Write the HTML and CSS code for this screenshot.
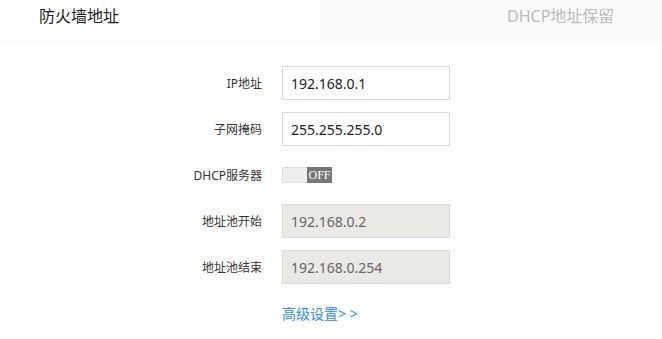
FILE: index.html
```html
<!DOCTYPE html>
<html lang="zh-CN">
<head>
    <meta charset="UTF-8">
    <meta name="viewport" content="width=device-width, initial-scale=1.0">
    <title>防火墙地址</title>
    <link rel="stylesheet" href="styles.css">
</head>
<body>
    <!-- Tabs -->
    <div class="tabs">
        <div class="tab active">防火墙地址</div>
        <div class="tab">DHCP地址保留</div>
    </div>

    <div class="form">
        <label class="form-label">IP地址</label>
        <input class="form-input" type="text" value="192.168.0.1">

        <label class="form-label">子网掩码</label>
        <input class="form-input" type="text" value="255.255.255.0">

        <label class="form-label">DHCP服务器</label>
        <div class="switch-cell">
            <div class="switch">
                <span class="switch-track"></span>
                <span class="switch-off">OFF</span>
            </div>
        </div>

        <label class="form-label">地址池开始</label>
        <input class="form-input" type="text" value="192.168.0.2" disabled>

        <label class="form-label">地址池结束</label>
        <input class="form-input" type="text" value="192.168.0.254" disabled>

        <span></span>
        <div class="link-cell">
            <a href="#" class="advanced">高级设置&gt; &gt;</a>
        </div>
    </div>
</body>
</html>
```

FILE: styles.css
```css
body {
    margin: 0;
    background-color: #fff;
    color: #333;
    font-family: "Noto Sans", "Noto Sans CJK SC", sans-serif;
}

.tabs {
    display: flex;
    height: 42px;
    border-bottom: 1px solid #f8f8f8;
}

.tab {
    font-size: 16px;
    line-height: 32px;
    color: #bbb;
    background-color: #fafafa;
    flex: 1;
    padding-left: 187px;
}

.tab.active {
    flex: 0 0 320px;
    padding-left: 39px;
    box-sizing: border-box;
    background-color: #fff;
    color: #1a1a1a;
}

.form {
    display: grid;
    grid-template-columns: 262px 168px;
    grid-auto-rows: 34px;
    column-gap: 20px;
    row-gap: 12px;
    margin-top: 23px;
    align-items: center;
}

.form-label {
    font-size: 12px;
    text-align: right;
    color: #333;
}

.form-input {
    box-sizing: border-box;
    width: 168px;
    height: 34px;
    border: 1px solid #d9d9d9;
    padding: 0 8px;
    font-family: "Noto Sans", sans-serif;
    font-size: 14px;
    color: #222;
    background-color: #fff;
    outline: none;
}

.form-input:disabled {
    background-color: #ebe9e3;
    color: #666;
}

.switch {
    display: flex;
    width: 50px;
    height: 16px;
    cursor: pointer;
}

.switch-track {
    flex: 1;
    background-color: #eee;
    border: 1px solid #ddd;
    border-right: none;
}

.switch-off {
    width: 25px;
    background-color: #777;
    color: #fff;
    font-family: "Liberation Serif", serif;
    font-size: 12px;
    line-height: 16px;
    text-align: center;
}

.advanced {
    font-size: 14px;
    color: #2e8ae6;
    text-decoration: none;
}
```
